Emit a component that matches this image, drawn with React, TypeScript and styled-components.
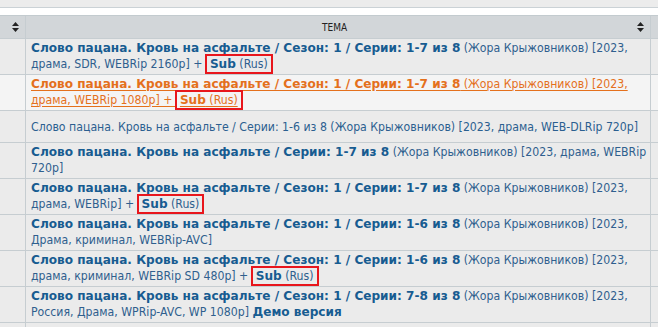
import React from 'react'
import styled, { createGlobalStyle } from 'styled-components'

const GlobalStyle = createGlobalStyle`
  html, body {
    margin: 0;
    padding: 0;
    background: #ffffff;
  }
  body {
    width: 658px;
    overflow: hidden;
  }
`

type Topic = {
  title?: string
  rest: string
  sub?: boolean
  extra?: string
  plain?: boolean
  visited?: boolean
}

const topics: Topic[] = [
  {
    title: 'Слово пацана. Кровь на асфальте / Сезон: 1 / Серии: 1-7 из 8',
    rest: ' (Жора Крыжовников) [2023, драма, SDR, WEBRip 2160p] + ',
    sub: true
  },
  {
    title: 'Слово пацана. Кровь на асфальте / Сезон: 1 / Серии: 1-7 из 8',
    rest: ' (Жора Крыжовников) [2023, драма, WEBRip 1080p] + ',
    sub: true,
    visited: true
  },
  {
    rest: 'Слово пацана. Кровь на асфальте / Серии: 1-6 из 8 (Жора Крыжовников) [2023, драма, WEB-DLRip 720p]',
    plain: true
  },
  {
    title: 'Слово пацана. Кровь на асфальте / Серии: 1-7 из 8',
    rest: ' (Жора Крыжовников) [2023, драма, WEBRip 720p]'
  },
  {
    title: 'Слово пацана. Кровь на асфальте / Сезон: 1 / Серии: 1-7 из 8',
    rest: ' (Жора Крыжовников) [2023, драма, WEBRip] + ',
    sub: true
  },
  {
    title: 'Слово пацана. Кровь на асфальте / Сезон: 1 / Серии: 1-6 из 8',
    rest: ' (Жора Крыжовников) [2023, Драма, криминал, WEBRip-AVC]'
  },
  {
    title: 'Слово пацана. Кровь на асфальте / Сезон: 1 / Серии: 1-6 из 8',
    rest: ' (Жора Крыжовников) [2023, драма, криминал, WEBRip SD 480p] + ',
    sub: true
  },
  {
    title: 'Слово пацана. Кровь на асфальте / Сезон: 1 / Серии: 7-8 из 8',
    rest: ' (Жора Крыжовников) [2023, Россия, Драма, WPRip-AVC, WP 1080p] ',
    extra: 'Демо версия'
  }
]

const Page = styled.div`
  width: 658px;
`

const TopStrip = styled.div`
  height: 7px;
  background: #ececec;
  border-bottom: 1px solid #cbd2d6;
`

const Gap = styled.div`
  height: 7px;
  background: #ffffff;
`

const Table = styled.div`
  border-top: 1px solid #c3cbcf;
`

const Row = styled.div<{ $head?: boolean; $hover?: boolean }>`
  display: flex;
  border-bottom: 1px solid #c6cdd1;
  background: ${({ $head, $hover }) => ($head ? '#d2d6d9' : $hover ? '#f4f4f4' : '#ebebeb')};
`

const Cell = styled.div<{ $w?: number; $last?: boolean }>`
  box-sizing: border-box;
  ${({ $w }) => ($w ? `width: ${$w}px; flex: none;` : 'flex: 1;')}
  border-right: ${({ $last }) => ($last ? 'none' : '1px solid #c6cdd1')};
`

const HeadCell = styled(Cell)`
  height: 22px;
  display: flex;
  align-items: center;
  justify-content: flex-end;
  padding-right: 6px;
`

const HeadLabel = styled.div`
  flex: 1;
  text-align: center;
  font-family: Tahoma, "DejaVu Sans Condensed", "Liberation Sans", sans-serif;
  font-size: 10px;
  color: #222;
  padding-left: 6px;
`

const TopicCell = styled(Cell)<{ $single?: boolean }>`
  padding: ${({ $single }) => ($single ? '8px 2px 7px 5px' : '1px 2px 2px 5px')};
  font-family: Tahoma, "DejaVu Sans Condensed", "Liberation Sans", sans-serif;
  font-size: 12.2px;
  line-height: 16px;
`

const Link = styled.span<{ $visited?: boolean; $plain?: boolean }>`
  color: ${({ $visited, $plain }) => ($visited ? '#e4701c' : $plain ? '#2b5f90' : '#2f5f8e')};
  text-decoration: ${({ $visited }) => ($visited ? 'underline' : 'none')};
  text-decoration-thickness: 1px;
  text-underline-offset: 2px;
`

const Title = styled.b<{ $visited?: boolean }>`
  font-family: Verdana, "DejaVu Sans", sans-serif;
  font-weight: bold;
  font-size: 12.1px;
  color: ${({ $visited }) => ($visited ? '#e4701c' : '#175c91')};
`

const SubBox = styled.span`
  border: 2px solid #e8161c;
  padding: 1px 3px 1px 3px;
  margin-left: -1px;
`

const SortIcon = () => (
  <svg width="7" height="10" viewBox="0 0 7 10">
    <path d="M3.5 0 L7 4 L0 4 Z" fill="#222" />
    <path d="M3.5 10 L7 6 L0 6 Z" fill="#222" />
  </svg>
)

const TopicRow = ({ topic }: { topic: Topic }) => {
  const { title, rest, sub, extra, plain, visited } = topic

  return (
    <Row $hover={visited}>
      <Cell $w={26} />
      <TopicCell $w={625} $single={plain}>
        <Link $visited={visited} $plain={plain}>
          {title && <Title $visited={visited}>{title}</Title>}
          {rest}
          {sub && (
            <SubBox>
              <Title $visited={visited}>Sub</Title> (Rus)
            </SubBox>
          )}
          {extra && <Title>{extra}</Title>}
        </Link>
      </TopicCell>
      <Cell $last />
    </Row>
  )
}

export default function App() {
  return (
    <Page>
      <GlobalStyle />
      <TopStrip />
      <Gap />
      <Table>
        <Row $head>
          <HeadCell $w={26}>
            <SortIcon />
          </HeadCell>
          <HeadCell $w={625}>
            <HeadLabel>ТЕМА</HeadLabel>
            <SortIcon />
          </HeadCell>
          <Cell $last />
        </Row>
        {topics.map((topic, i) => (
          <TopicRow key={i} topic={topic} />
        ))}
        <Row>
          <Cell $w={26} style={{ height: 20 }} />
          <Cell $w={625} />
          <Cell $last />
        </Row>
      </Table>
    </Page>
  )
}
